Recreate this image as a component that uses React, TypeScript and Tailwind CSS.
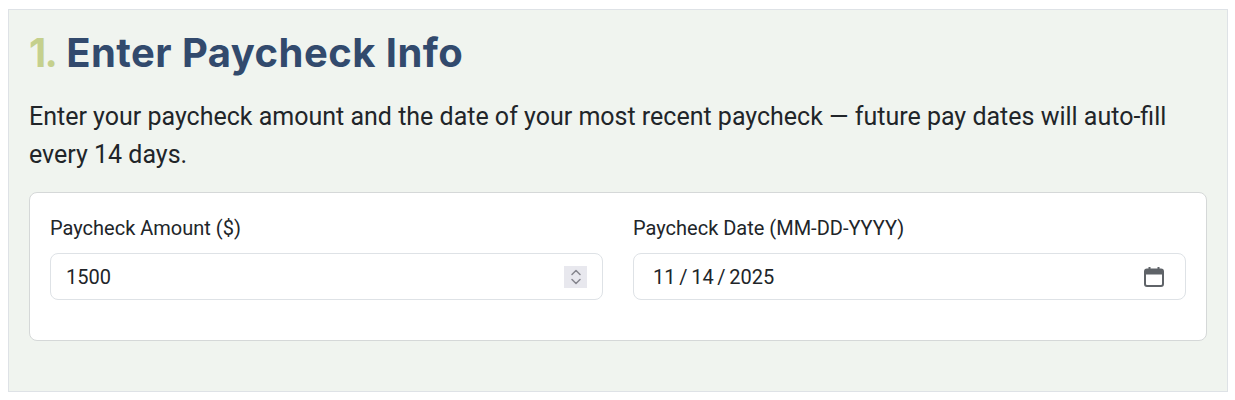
export default function App() {
  return (
    <div className="bg-white pl-2 pr-[7px] pt-[9px] h-[400px] font-['Roboto',sans-serif]">
      <section className="h-[383px] border border-[#dee2e6] bg-[#f0f4ef] px-5 pt-[16px]">
        <h2 className="font-['Inter',sans-serif] text-[40px] leading-[54px] font-bold tracking-[0.45px] text-[#324a6d]">
          <span className="text-[#c5d08d] tracking-[-1.7px]">1.</span> Enter Paycheck Info
        </h2>
        <p className="mt-[18px] text-[25px] leading-[37.5px] text-[#212529]">
          Enter your paycheck amount and the date of your most recent paycheck — future pay dates will auto-fill every 14 days.
        </p>
        <div className="mt-[19px] h-[149px] rounded-lg border border-[#d5d8d8] bg-white px-5 pt-[20px]">
          <div className="grid grid-cols-2 gap-[30px]">
            <div className="flex flex-col">
              <span className="text-[20px] leading-[27px] text-[#212529] mb-[11px] mt-[2px]">Paycheck Amount ($)</span>
              <div className="flex h-[47px] items-center justify-between rounded-lg border border-[#dee2e6] bg-white pl-[15px] pr-[15px] text-[20px] text-[#212529]">
                <span>1500</span>
                <span className="flex h-[22px] w-[23px] items-center justify-center bg-[#e8e8ee]">
                  <svg width="12" height="18" viewBox="0 0 12 18" fill="none" stroke="#85858d" strokeWidth="1.5" strokeLinecap="round" strokeLinejoin="round">
                    <path d="M2 6.5 6 2.5l4 4" />
                    <path d="M2 11.5l4 4 4-4" />
                  </svg>
                </span>
              </div>
            </div>
            <div className="flex flex-col">
              <span className="text-[20px] leading-[27px] text-[#212529] mb-[11px] mt-[2px]">Paycheck Date (MM-DD-YYYY)</span>
              <div className="flex h-[47px] items-center justify-between rounded-lg border border-[#dee2e6] bg-white pl-[19px] pr-[20px] text-[20px] text-[#212529]">
                <span className="[word-spacing:-1.25px]">11 / 14 / 2025</span>
                <svg width="22" height="22" viewBox="0 0 22 22" fill="none">
                  <rect x="2" y="3.5" width="18" height="16.5" rx="2" stroke="#5f6368" strokeWidth="2" />
                  <rect x="2" y="3.5" width="18" height="5" fill="#5f6368" />
                  <path d="M6.5 1v3M15.5 1v3" stroke="#5f6368" strokeWidth="2" />
                </svg>
              </div>
            </div>
          </div>
        </div>
      </section>
    </div>
  );
}
